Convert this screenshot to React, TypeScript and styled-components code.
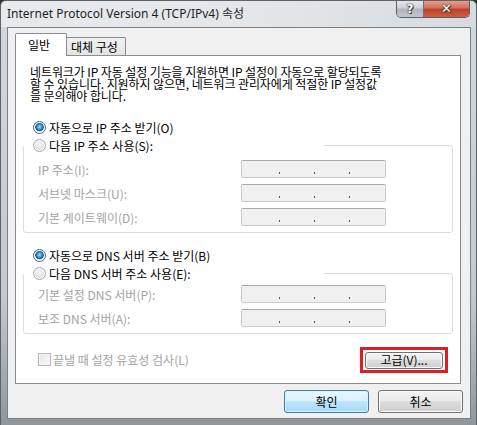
import styled, { createGlobalStyle, css } from 'styled-components';

const GlobalStyle = createGlobalStyle`
  html, body {
    margin: 0;
    padding: 0;
    background: #2c3328;
  }
  body {
    font-family: 'Noto Sans CJK KR', 'Noto Sans', sans-serif;
    font-size: 12px;
    color: #000;
  }
`;

const Window = styled.div`
  width: 477px;
  height: 425px;
  box-sizing: border-box;
  display: flex;
  flex-direction: column;
  border-radius: 6px 6px 0 0;
  border: 1px solid #5d6368;
  border-bottom: none;
  background:
    linear-gradient(to bottom, #dde2e6 0%, #d2d7dc 30px, #c3c9cf 70%, #8f979d 100%);
  overflow: hidden;
`;

const TitleBar = styled.div`
  height: 26px;
  display: flex;
  align-items: flex-start;
  padding-left: 6px;
  background: linear-gradient(to right, #e7eaed 0%, #e3e7ea 55%, #d6dbdf 100%);
`;

const Title = styled.div`
  font-family: 'Noto Sans', 'Noto Sans CJK KR', sans-serif;
  font-size: 12px;
  line-height: 26px;
  color: #1e1e1e;
  white-space: nowrap;
`;

const CaptionButtons = styled.div`
  margin-left: auto;
  margin-right: 6px;
  display: flex;
  height: 17px;
  margin-top: -1px;
  border: 1px solid #5b6066;
  border-top: none;
  border-radius: 0 0 5px 5px;
  overflow: hidden;
`;

const CaptionButton = styled.div<{ $close?: boolean }>`
  width: ${(p) => (p.$close ? 45 : 26)}px;
  display: flex;
  align-items: center;
  justify-content: center;
  color: #fff;
  font-family: 'DejaVu Sans', sans-serif;
  font-weight: bold;
  font-size: ${(p) => (p.$close ? 13 : 12)}px;
  text-shadow: 0 0 1px #222, 0 0 2px #333, 1px 1px 0 #444;
  ${(p) =>
    p.$close
      ? css`
          background: linear-gradient(to bottom, #e8a593 0%, #d3735f 45%, #c0412a 55%, #cf5a3f 100%);
        `
      : css`
          border-right: 1px solid #6d7278;
          background: linear-gradient(to bottom, #e8ebee 0%, #cdd2d6 45%, #aeb5bb 55%, #c0c6cb 100%);
        `}
`;

const Client = styled.div`
  flex: 1;
  margin: 0 5px 6px 6px;
  border: 1px solid #7a8086;
  background: #f0f0f0;
  display: flex;
  flex-direction: column;
  padding: 5px 9px 0 7px;
`;

const TabRow = styled.div`
  display: flex;
  align-items: flex-end;
  height: 22px;
  position: relative;
  z-index: 1;
`;

const Tab = styled.div<{ $active?: boolean }>`
  border: 1px solid #898c95;
  border-bottom: none;
  border-radius: 2px 2px 0 0;
  box-sizing: border-box;
  display: flex;
  align-items: center;
  ${(p) =>
    p.$active
      ? css`
          background: #fff;
          height: 23px;
          width: 52px;
          margin-bottom: -1px;
          padding: 0 0 2px 12px;
        `
      : css`
          background: linear-gradient(to bottom, #f2f2f2, #e3e3e3);
          height: 18px;
          width: 60px;
          margin-left: -1px;
          padding-left: 4px;
        `}
`;

const Panel = styled.div`
  height: 329px;
  box-sizing: border-box;
  background: #fff;
  border: 1px solid #898c95;
  display: flex;
  flex-direction: column;
  padding: 10px 7px 0 7px;
`;

const Intro = styled.p`
  margin: 0 0 16px 7px;
  line-height: 12px;
  letter-spacing: -0.1px;
`;

const Radio = styled.label<{ $checked?: boolean }>`
  display: flex;
  align-items: center;
  height: 18px;
  margin-left: 10px;
  gap: 3px;
  white-space: nowrap;
  &::before {
    content: '';
    width: 11px;
    height: 11px;
    border-radius: 50%;
    border: 1px solid ${(p) => (p.$checked ? '#3f6c94' : '#a7abaf')};
    background: ${(p) =>
      p.$checked
        ? 'radial-gradient(circle at 50% 45%, #a9dcff 0, #3b8fcf 2.5px, #1d4f82 4px, #e4e9ee 4.6px, #f7f9fb 6px)'
        : 'radial-gradient(circle at 50% 40%, #f8f8f8 0, #e6e6e6 4px, #d6d6d6 6px)'};
    box-shadow: inset 0 0 0 1px #fff;
  }
`;

const Group = styled.fieldset<{ $top: number; $after?: number }>`
  margin: 0 0 ${(p) => p.$after ?? 0}px;
  padding: ${(p) => p.$top}px 0 6px 14px;
  border: 1px solid #d5dfe5;
  border-radius: 3px;
  display: flex;
  flex-direction: column;
  gap: 6px;
  min-width: 0;

  > legend {
    padding: 0;
    margin-left: -14px;
    height: 18px;
    width: 300px;
    display: flex;
  }

  > legend > label {
    margin-left: 9px;
    padding-right: 2px;
    background: #fff;
  }
`;

const FieldRow = styled.div`
  display: flex;
  align-items: center;
  height: 18px;
  color: #a3a3a3;
`;

const FieldLabel = styled.span`
  flex: 1;
`;

const IpBox = styled.div`
  width: 145px;
  height: 18px;
  box-sizing: border-box;
  margin-right: 66px;
  border: 1px solid #c9cacc;
  border-top-color: #a6a8ab;
  border-radius: 2px;
  background: #f0f0f0;
  display: flex;
  align-items: flex-end;
  padding: 0 0 3px 3px;
`;

const Octet = styled.span`
  width: 34px;
`;

const Dot = styled.span`
  width: 1px;
  height: 2px;
  background: #555;
`;

const BottomRow = styled.div`
  display: flex;
  align-items: center;
  margin-top: 13px;
  padding-left: 15px;
  padding-right: 5px;
`;

const Check = styled.label`
  display: flex;
  align-items: center;
  gap: 2px;
  color: #a3a3a3;
  white-space: nowrap;
  &::before {
    content: '';
    width: 11px;
    height: 11px;
    border: 1px solid #b8b8b8;
    background: linear-gradient(135deg, #e6e6e6, #fafafa);
    box-shadow: inset 0 0 0 1px #f4f4f4;
  }
`;

const Highlight = styled.div`
  margin-left: auto;
  border: 3px solid #e01c24;
  padding: 1px 2px;
`;

const Button = styled.button<{ $default?: boolean; $w?: number; $h?: number }>`
  font-family: 'Noto Sans CJK KR', 'Noto Sans', sans-serif;
  font-size: 12px;
  color: #000;
  width: ${(p) => p.$w ?? 85}px;
  height: ${(p) => p.$h ?? 23}px;
  padding: 0;
  border-radius: 3px;
  border: 1px solid #707070;
  line-height: 1;
  background: linear-gradient(to bottom, #f2f2f2 0%, #ebebeb 49%, #dddddd 50%, #cfcfcf 100%);
  box-shadow: inset 0 0 0 1px #fcfcfc;
  ${(p) =>
    p.$default &&
    css`
      border-color: #3c7fb1;
      background: linear-gradient(to bottom, #eaf6fd 0%, #d9f0fc 49%, #bee6fd 50%, #a7d9f5 100%);
      box-shadow: inset 0 0 0 1px #d9f1fb;
    `}
`;

const Footer = styled.div`
  display: flex;
  justify-content: flex-end;
  gap: 9px;
  margin-top: 6px;
  margin-right: -2px;
`;

function IpField({ label }: { label: string }) {
  return (
    <FieldRow>
      <FieldLabel>{label}</FieldLabel>
      <IpBox>
        <Octet />
        <Dot />
        <Octet />
        <Dot />
        <Octet />
        <Dot />
      </IpBox>
    </FieldRow>
  );
}

export default function App() {
  return (
    <>
      <GlobalStyle />
      <Window>
        <TitleBar>
          <Title>Internet Protocol Version 4 (TCP/IPv4) 속성</Title>
          <CaptionButtons>
            <CaptionButton>?</CaptionButton>
            <CaptionButton $close>✕</CaptionButton>
          </CaptionButtons>
        </TitleBar>
        <Client>
          <TabRow>
            <Tab $active>일반</Tab>
            <Tab>대체 구성</Tab>
          </TabRow>
          <Panel>
            <Intro>
              네트워크가 IP 자동 설정 기능을 지원하면 IP 설정이 자동으로 할당되도록
              <br />할 수 있습니다. 지원하지 않으면, 네트워크 관리자에게 적절한 IP 설정값
              <br />을 문의해야 합니다.
            </Intro>
            <Radio $checked>자동으로 IP 주소 받기(O)</Radio>
            <Group $top={6} $after={13}>
              <legend>
                <Radio>다음 IP 주소 사용(S):</Radio>
              </legend>
              <IpField label="IP 주소(I):" />
              <IpField label="서브넷 마스크(U):" />
              <IpField label="기본 게이트웨이(D):" />
            </Group>
            <Radio $checked>자동으로 DNS 서버 주소 받기(B)</Radio>
            <Group $top={3}>
              <legend>
                <Radio>다음 DNS 서버 주소 사용(E):</Radio>
              </legend>
              <IpField label="기본 설정 DNS 서버(P):" />
              <IpField label="보조 DNS 서버(A):" />
            </Group>
            <BottomRow>
              <Check>끝낼 때 설정 유효성 검사(L)</Check>
              <Highlight>
                <Button $w={78} $h={17}>고급(V)...</Button>
              </Highlight>
            </BottomRow>
          </Panel>
          <Footer>
            <Button $default>확인</Button>
            <Button>취소</Button>
          </Footer>
        </Client>
      </Window>
    </>
  );
}
